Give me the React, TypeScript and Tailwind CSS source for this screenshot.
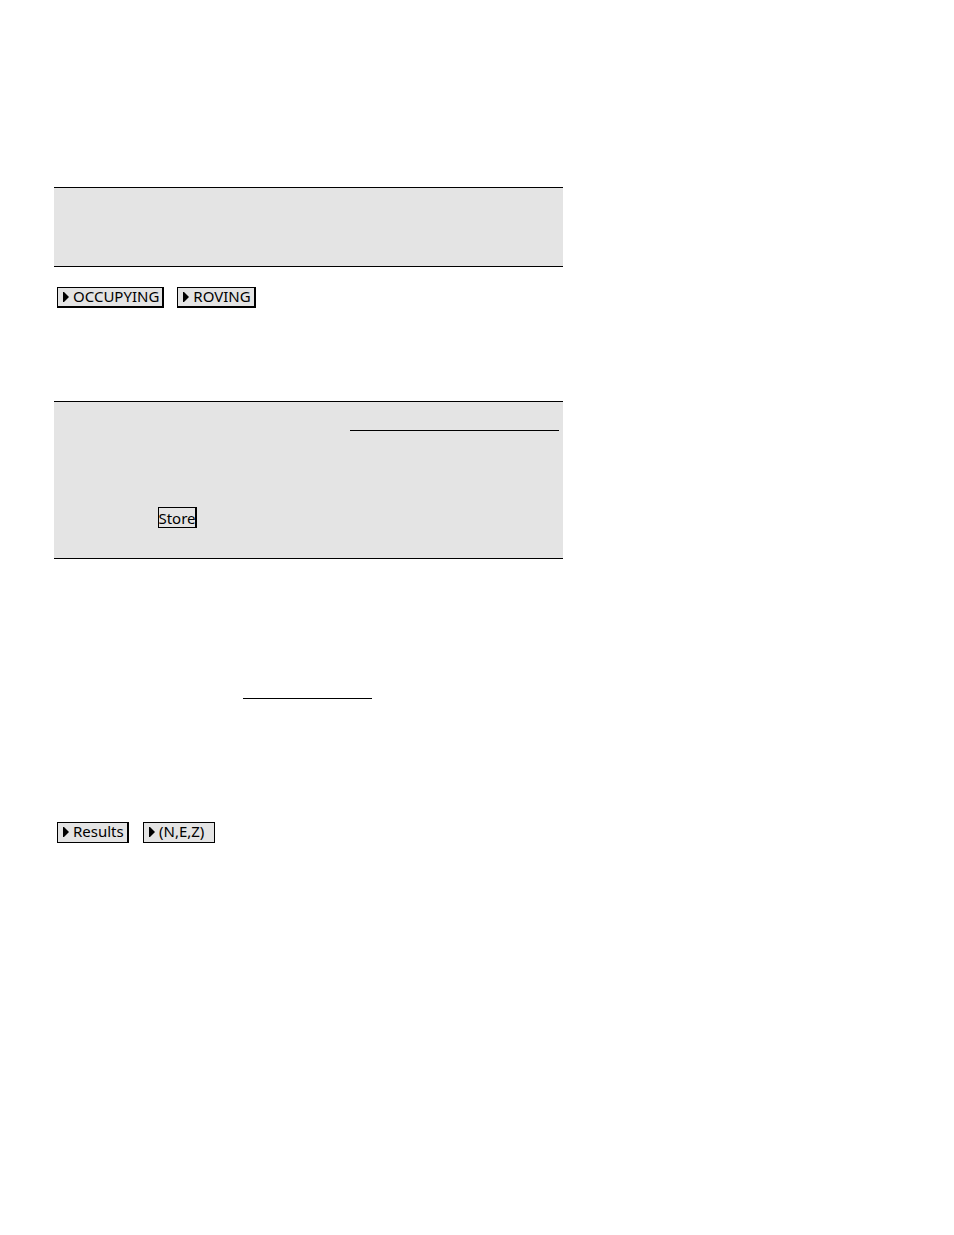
import React from 'react';

export default function App() {
  return (
    <main className="min-h-screen bg-white pt-[187px] pl-[54px] font-['Noto_Sans',sans-serif] text-[15px] leading-4 text-black">
      <div className="w-full max-w-[509px]">
        <section className="h-20 border-y border-black bg-[#e4e4e4]" />

        <div className="mt-5 flex gap-[13px] pl-[3px]">
          <MenuButton edge="border-r-2 border-b-2">OCCUPYING</MenuButton>
          <MenuButton edge="border-r-2 border-b-2">ROVING</MenuButton>
        </div>

        <section className="mt-[93px] h-[158px] border-y border-black bg-[#e4e4e4]">
          <div className="flex justify-end pt-7 pr-1">
            <hr className="w-[209px] border-black" />
          </div>
          <div className="mt-[76px] pl-[104px]">
            <button
              type="button"
              className="flex h-[21px] w-[39px] items-center justify-center border border-r-2 border-black bg-[#e4e4e4]"
            >
              Store
            </button>
          </div>
        </section>

        <div className="mt-[139px] pl-[189px]">
          <hr className="w-[129px] border-black" />
        </div>

        <div className="mt-[123px] flex gap-[14px] pl-[3px]">
          <MenuButton edge="border-r-2">Results</MenuButton>
          <MenuButton>(N,E,Z)</MenuButton>
        </div>
      </div>
    </main>
  );
}

function MenuButton({ edge = '', children }: { edge?: string; children: React.ReactNode }) {
  return (
    <button
      type="button"
      className={`flex h-[21px] min-w-[72px] items-start gap-1 border border-black bg-[#e4e4e4] pr-[3px] pl-[5px] whitespace-nowrap ${edge}`}
    >
      <svg className="mt-[3px] h-3 w-1.5" viewBox="0 0 6 12" fill="currentColor" aria-hidden="true">
        <path d="M0 1 L1 1 L6 6 L1 11 L0 11 Z" />
      </svg>
      {children}
    </button>
  );
}
